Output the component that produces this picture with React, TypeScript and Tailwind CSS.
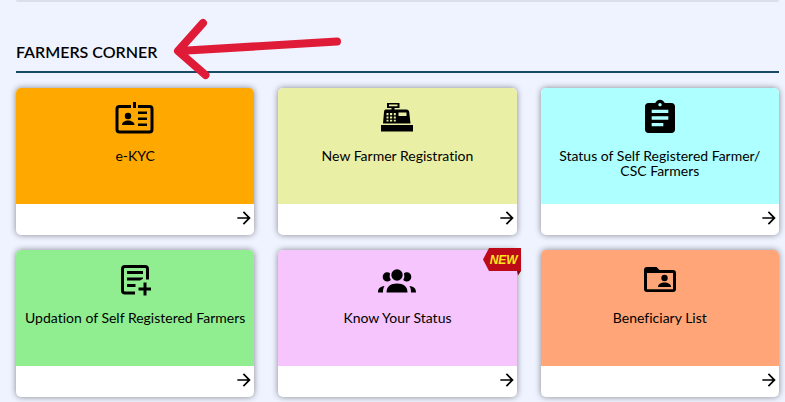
import React from 'react';
import { MdArrowForward, MdAssignment } from 'react-icons/md';

function IdCardIcon() {
  return (
    <svg className="w-10 h-10" viewBox="0 0 40 40" aria-hidden="true">
      <path
        d="M16 8.500H4.500A2.500 2.500 0 0 0 2 11V31.500A2.500 2.500 0 0 0 4.500 34H34.500A2.500 2.500 0 0 0 37 31.500V11A2.500 2.500 0 0 0 34.500 8.500H23"
        fill="none"
        stroke="currentColor"
        strokeWidth="3"
      />
      <path d="M18 4h3v6h-3z M23 13.500h9v2.500h-9z M23 19.500h9v2.500h-9z M23 25.500h9v2.500h-9z" />
      <circle cx="13" cy="18" r="3.200" />
      <path d="M7 27c0-3 3-4.500 6-4.500s6.500 1.500 6.500 4.500z" />
    </svg>
  );
}

function RegisterIcon() {
  return (
    <svg className="w-10 h-10" viewBox="0 0 40 40" fillRule="evenodd" aria-hidden="true">
      <path d="M10 5h12.500v5h-5V12h-3v-2H10z M12 6.500v1.700h8.500V6.500z" />
      <path d="M8.500 11.500h21c1.500 0 2.500 1 2.700 2.500L33.500 25.500H6L7 14c.1-1.500.8-2.500 1.500-2.500z M9.500 15v2.200h2V15z M13 15v2.200h2.200V15z M16.800 15v2.200h2V15z M9.500 18.500v2h2v-2z M13 18.500v2h2.200v-2z M16.800 18.500v2h2v-2z M9.500 21.800v1.700h2v-1.700z M13 21.800v1.700h2.200v-1.700z M16.800 21.800v1.700h2v-1.700z M21.500 14.500v3.500h8v-3.500z" />
      <path d="M4 27h32v6.500H4z" />
    </svg>
  );
}

function ClipboardIcon() {
  return <MdAssignment className="w-10 h-10" aria-hidden="true" />;
}

function NoteAddIcon() {
  return (
    <svg className="w-10 h-10" viewBox="0 0 40 40" aria-hidden="true">
      <path
        d="M20 33H9.500A2.500 2.500 0 0 1 7.500 30.500V8.500A2.500 2.500 0 0 1 10 6.500H30.500A2.500 2.500 0 0 1 32.500 9V19.500"
        fill="none"
        stroke="currentColor"
        strokeWidth="3"
      />
      <path d="M12 11h16v3H12z M12 17.500h16v1.200l-3 1.800H12z M12 24h8.500v3H12z" />
      <path d="M28.500 22.500h3v5h4.500v3h-4.500v5h-3v-5H23.500v-3h5z" />
    </svg>
  );
}

function PeopleIcon() {
  return (
    <svg className="w-10 h-10" viewBox="0 0 40 40" aria-hidden="true">
      <circle cx="20" cy="15" r="5.700" />
      <path d="M13 13.200a8.200 8.200 0 0 0 .8 6.700A4.600 4.600 0 1 1 13 13.200z M27 13.200a8.200 8.200 0 0 1-.8 6.700A4.600 4.600 0 1 0 27 13.200z" />
      <path d="M9.500 32.500c0-6 4-9 10.500-9s10.500 3 10.500 9z" />
      <path d="M1 32.500c0-4 2-6 6.500-6.500-1.200 2-1.500 4-1.500 6.500z M39 32.500c0-4-2-6-6.500-6.500 1.200 2 1.500 4 1.500 6.500z" />
    </svg>
  );
}

function FolderIcon() {
  return (
    <svg className="w-10 h-10" viewBox="0 0 40 40" fillRule="evenodd" aria-hidden="true">
      <path d="M7 7h9.500l3 3h13.500a3 3 0 0 1 3 3v16a3 3 0 0 1-3 3H7a3 3 0 0 1-3-3V10a3 3 0 0 1 3-3z M7 13v16.200h26V13z" />
      <circle cx="24.500" cy="18" r="3.200" />
      <path d="M18 27c0-3 3-4.500 6.500-4.500S31 24 31 27z" />
    </svg>
  );
}

const services = [
  { title: 'e-KYC', color: 'bg-[#ffa800]', Icon: IdCardIcon },
  { title: 'New Farmer Registration', color: 'bg-[#eaefa6]', Icon: RegisterIcon },
  { title: 'Status of Self Registered Farmer/ CSC Farmers', color: 'bg-[#aeffff]', Icon: ClipboardIcon },
  { title: 'Updation of Self Registered Farmers', color: 'bg-[#90ee90]', Icon: NoteAddIcon },
  { title: 'Know Your Status', color: 'bg-[#f6c5fd]', Icon: PeopleIcon, isNew: true },
  { title: 'Beneficiary List', color: 'bg-[#ffa577]', Icon: FolderIcon },
];

function NewBadge() {
  return (
    <div className="absolute -top-0.5 -right-1 w-[38px] h-7">
      <svg className="absolute inset-0 w-full h-full" viewBox="0 0 38 28" aria-hidden="true">
        <path d="M6 0H38V23H6L0 11.500z" fill="#bd0a18" />
        <path d="M34 23h4l-3 4.500z" fill="#7d0710" />
      </svg>
      <span className="absolute inset-x-0 top-0 pl-1 text-center font-['Liberation_Sans',sans-serif] text-xs leading-6 font-bold italic text-[#ffe81a]">
        NEW
      </span>
    </div>
  );
}

function App() {
  return (
    <div className="min-h-screen bg-[#eff3ff] pl-4 pr-1.5 pb-1 font-['Lato',sans-serif] text-black [font-variant-ligatures:none]">
      <div className="h-0.5 rounded-b bg-[#dcdfeb]" />
      <header className="relative border-b-2 border-[#174a66] pt-[38px] pb-[7px]">
        <h1 className="text-base leading-6 font-semibold">FARMERS CORNER</h1>
        <svg className="absolute left-[150px] top-3 w-[184px] h-[70px]" viewBox="166 14 184 70" aria-hidden="true">
          <path
            d="M337 41.500L179 51M203 23L178 51L205.500 75"
            fill="none"
            stroke="#e01b37"
            strokeWidth="8"
            strokeLinecap="round"
            strokeLinejoin="round"
          />
        </svg>
      </header>
      <main className="mt-[15px] grid grid-cols-3 gap-x-6 gap-y-[15px]">
        {services.map(({ title, color, Icon, isNew }) => (
          <a
            key={title}
            href="#"
            className="relative flex flex-col rounded-[5px] bg-white shadow-[0_0_6px_rgba(0,0,0,0.45)]"
          >
            <div className={`${color} flex min-h-[116px] flex-col items-center gap-2.5 rounded-t-[5px] px-1 pt-2.5`}>
              <Icon />
              <h2 className="max-w-[230px] text-center text-sm leading-[15px]">{title}</h2>
            </div>
            <div className="flex h-[31px] items-start justify-end pt-1">
              <MdArrowForward className="w-5 h-5" aria-hidden="true" />
            </div>
            {isNew && <NewBadge />}
          </a>
        ))}
      </main>
    </div>
  );
}

export default App;
